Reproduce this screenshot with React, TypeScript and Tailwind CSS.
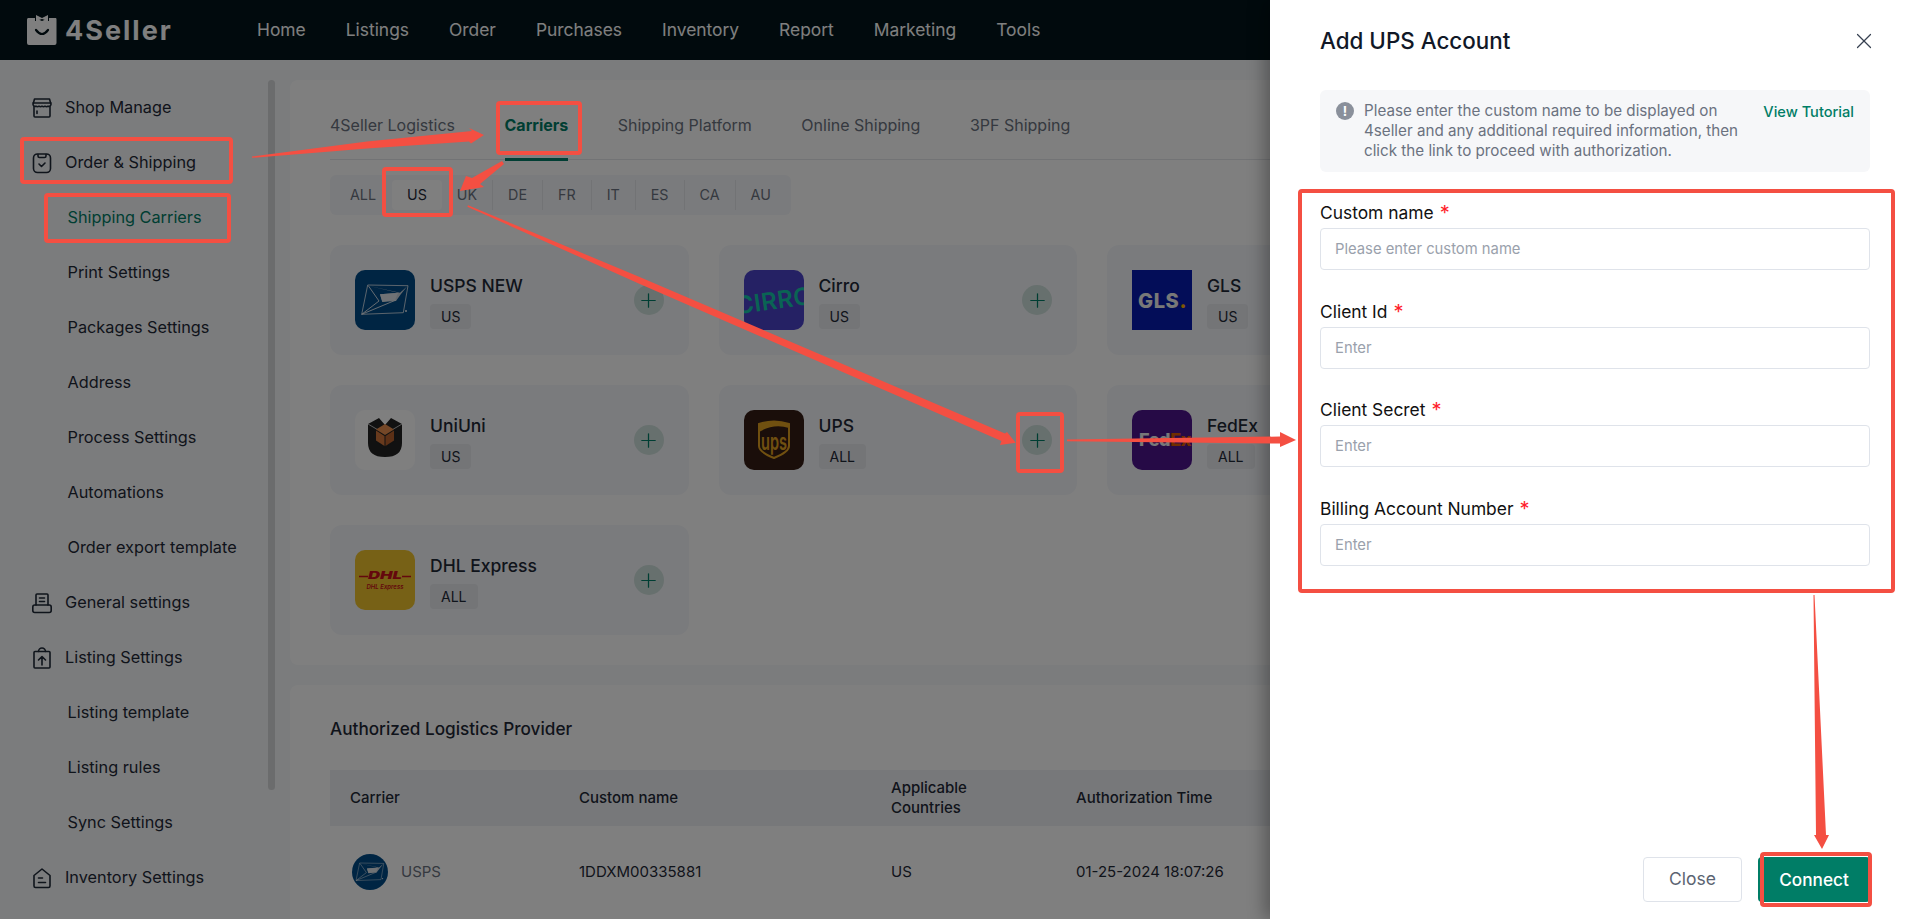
import React from "react";
import { X, Plus } from "lucide-react";

const nav = ["Home", "Listings", "Order", "Purchases", "Inventory", "Report", "Marketing", "Tools"];
const tabs = ["4Seller Logistics", "Carriers", "Shipping Platform", "Online Shipping", "3PF Shipping"];
const countries = ["ALL", "US", "UK", "DE", "FR", "IT", "ES", "CA", "AU"];

const ic = { width: 22, height: 22, viewBox: "0 0 22 22", fill: "none", stroke: "#1f2937", strokeWidth: 1.6, strokeLinecap: "round" as const, strokeLinejoin: "round" as const };

const ShopIcon = () => (
  <svg {...ic}><path d="M3.500 2h15l1.500 5.500a2.200 2.200 0 0 1-3 1.700 2.600 2.600 0 0 1-3 0 2.600 2.600 0 0 1-3 0 2.600 2.600 0 0 1-3 0 2.600 2.600 0 0 1-3 0A2.200 2.200 0 0 1 2 7.500z" /><path d="M3 9.500V19a1 1 0 0 0 1 1h14a1 1 0 0 0 1-1V9.500M2 6h18M6 14v2.500" /></svg>
);
const OrderIcon = () => (
  <svg {...ic}><rect x="2.500" y="2" width="17" height="18.500" rx="4" /><path d="M7 2.500v1.500a1.500 1.500 0 0 0 1.500 1.500h5A1.500 1.500 0 0 0 15 4V2.500M8 12l2.500 2.500L14 11" /></svg>
);
const GeneralIcon = () => (
  <svg {...ic}><path d="M5 13V3a1 1 0 0 1 1-1h10a1 1 0 0 1 1 1v10" /><path d="M8.500 6h5M8.500 9.500h5" /><rect x="1.800" y="13" width="18.400" height="7.500" rx="2" /></svg>
);
const ListingIcon = () => (
  <svg {...ic}><path d="M7.500 4.500H4a1 1 0 0 0-1 1V20a1 1 0 0 0 1 1h14a1 1 0 0 0 1-1V5.500a1 1 0 0 0-1-1h-3.500" /><path d="M7.500 4.500a3.500 3.500 0 0 1 7 0zM11 18v-8M7.500 13 11 9.500l3.500 3.500" /></svg>
);
const InventoryIcon = () => (
  <svg {...ic}><path d="M3 8.500 11 2l8 6.500V19a1.500 1.500 0 0 1-1.500 1.500h-13A1.500 1.500 0 0 1 3 19z" /><path d="M7.500 11h4M7.500 15.500h7" /></svg>
);

type Side = { label: string; icon?: React.ReactNode; active?: boolean };
const side: Side[] = [
  { label: "Shop Manage", icon: <ShopIcon /> },
  { label: "Order & Shipping", icon: <OrderIcon /> },
  { label: "Shipping Carriers", active: true },
  { label: "Print Settings" },
  { label: "Packages Settings" },
  { label: "Address" },
  { label: "Process Settings" },
  { label: "Automations" },
  { label: "Order export template" },
  { label: "General settings", icon: <GeneralIcon /> },
  { label: "Listing Settings", icon: <ListingIcon /> },
  { label: "Listing template" },
  { label: "Listing rules" },
  { label: "Sync Settings" },
  { label: "Inventory Settings", icon: <InventoryIcon /> },
];

const UspsMark = () => (
  <svg viewBox="0 0 60 60" className="w-full h-full">
    <path d="M12.700 15 53 15.700 48.300 42.700 6.700 44.300z" fill="none" stroke="#e4e9ee" strokeWidth="0.8" />
    <path d="M13.300 15.700 45 22.700 52 16.500 46 24 41 31 27.300 32 25 24.300 43 22.700z" fill="#c9d2da" />
    <path d="M25 24.300 43 23 40 30 27.300 31.700z" fill="#dfe5ea" />
    <path d="M6.700 44.300 41 30" stroke="#e4e9ee" strokeWidth="0.9" />
    <path d="M13.300 15.700 24 31 6.700 44.300" fill="none" stroke="#e4e9ee" strokeWidth="0.9" />
    <circle cx="51" cy="41" r="1" fill="#e4e9ee" />
  </svg>
);

const logos: Record<string, React.ReactNode> = {
  usps: <div className="w-[60px] h-[60px] rounded-[10px] overflow-hidden bg-[#004b87]"><UspsMark /></div>,
  cirro: (
    <div className="w-[60px] h-[60px] rounded-[10px] overflow-hidden bg-[#4a42c8]">
      <svg viewBox="0 0 60 60" className="w-full h-full">
        <text x="30" y="39" textAnchor="middle" transform="rotate(-8 30 30)" fontFamily="Inter, sans-serif" fontWeight="600" fontSize="24" fill="#14c9a8" letterSpacing="0.5">CIRRO</text>
      </svg>
    </div>
  ),
  gls: (
    <div className="w-[60px] h-[60px] overflow-hidden bg-[#061ab1]">
      <svg viewBox="0 0 60 60" className="w-full h-full">
        <text x="6" y="37.500" fontFamily="Inter, sans-serif" fontWeight="800" fontSize="20" fill="#f0f0f0" letterSpacing="0.600">GLS<tspan fill="#ffb000">.</tspan></text>
      </svg>
    </div>
  ),
  uni: (
    <div className="w-[60px] h-[60px] rounded-[10px] overflow-hidden bg-[#ffffff]">
      <svg viewBox="0 0 60 60" className="w-full h-full">
        <path d="M13 14 24 8 30 15 36 8 47 14V33Q47 47 30 47 13 47 13 33z" fill="#222" />
        <path d="M13 14l17 10 17-10" fill="none" stroke="#ddd" strokeWidth="0.800" />
        <path d="M30 15 41 21V31L30 38 20 31V21z" fill="#222" />
        <path d="M30 14 39 19.500 30 25 21 19.500z" fill="#e98f4f" />
        <path d="M21 20.500 29.500 26V36L21 30.500z" fill="#d0743a" />
        <path d="M39 20.500 30.500 26V36L39 30.500z" fill="#b9612c" />
      </svg>
    </div>
  ),
  ups: (
    <div className="w-[60px] h-[60px] rounded-[10px] overflow-hidden bg-[#351c15]">
      <svg viewBox="0 0 60 60" className="w-full h-full">
        <path d="M15 14Q30 9 45 14V36Q45 42 30 48 15 42 15 36z" fill="none" stroke="#e0a020" strokeWidth="2" />
        <path d="M15 22Q30 13 45 18V14Q30 9 15 14z" fill="#e0a020" />
        <text x="30" y="40" textAnchor="middle" fontFamily="Inter, sans-serif" fontWeight="600" fontSize="24" fill="#e0a020" textLength="26" lengthAdjust="spacingAndGlyphs">ups</text>
      </svg>
    </div>
  ),
  fedex: (
    <div className="w-[60px] h-[60px] rounded-[10px] overflow-hidden bg-[#4d148c]">
      <svg viewBox="0 0 60 60" className="w-full h-full">
        <text x="7" y="36" fontFamily="Inter, sans-serif" fontWeight="800" fontSize="18" fill="#f0f0f0" letterSpacing="-0.400">Fed<tspan fill="#e05a00">Ex</tspan></text>
      </svg>
    </div>
  ),
  dhl: (
    <div className="w-[60px] h-[60px] rounded-[10px] overflow-hidden bg-[#eec22c]">
      <svg viewBox="0 0 60 60" className="w-full h-full">
        <path d="M4 26.500h9M47 26.500h9" stroke="#c8101a" strokeWidth="1.300" />
        <text x="30" y="29" textAnchor="middle" fontFamily="Inter, sans-serif" fontStyle="italic" fontWeight="900" fontSize="11" fill="#c8101a" textLength="34" lengthAdjust="spacingAndGlyphs">DHL</text>
        <text x="30" y="38.500" textAnchor="middle" fontFamily="Inter, sans-serif" fontStyle="italic" fontWeight="600" fontSize="6.500" fill="#c8101a" textLength="37" lengthAdjust="spacingAndGlyphs">DHL Express</text>
      </svg>
    </div>
  ),
};

const carriers = [
  { name: "USPS NEW", tag: "US", logo: "usps" },
  { name: "Cirro", tag: "US", logo: "cirro" },
  { name: "GLS", tag: "US", logo: "gls" },
  { name: "UniUni", tag: "US", logo: "uni" },
  { name: "UPS", tag: "ALL", logo: "ups" },
  { name: "FedEx", tag: "ALL", logo: "fedex" },
  { name: "DHL Express", tag: "ALL", logo: "dhl" },
];

const fields = [
  { label: "Custom name", ph: "Please enter custom name" },
  { label: "Client Id", ph: "Enter" },
  { label: "Client Secret", ph: "Enter" },
  { label: "Billing Account Number", ph: "Enter" },
];

const RED = "#f44f42";
const boxes = [
  [20, 137, 213, 47],
  [44, 193, 187, 50],
  [496, 101, 86, 54],
  [382, 167, 71, 50],
  [1016, 412, 48, 61],
  [1298, 189, 597, 404],
  [1760, 852, 112, 55],
];
const arrows = [
  "252,156.400 367,141.500 472,131 469,128 484,135 471,143.500 469,141.500 367,148.500 252,157.800",
  "502,161 504,164 480,184 484,187 460,191 466,176 472,178",
  "468,205.300 640.800,277.500 1005,433.500 1007,432 1015.700,442.700 1000,445 1001.500,441 638.700,283.500 467.400,206.700",
  "1067,439.600 1280,436.500 1280,432 1296,440 1280,447 1280,443.500 1067,441.200",
  "1813.500,595 1816,835 1814,835 1822,849 1829,835 1826,835 1814.500,595",
];

export default function App() {
  return (
    <div className="relative w-[1920px] h-[919px] overflow-hidden bg-[#f6f8fa] font-[Inter,sans-serif] text-[#1f2937]">
      {/* Page */}
      <header className="flex items-center h-[60px] bg-[#02141a] pl-[26px]">
        <div className="flex items-center w-[231px] shrink-0">
          <svg width="32" height="32" viewBox="0 0 32 32">
            <path d="M2 4h7l7 3 7-3h7a2 2 0 0 1 .500 1.500V29a2 2 0 0 1-2 2H3a2 2 0 0 1-2-2V6a2 2 0 0 1 1-2z" fill="#fff" />
            <path d="M10 1l6 3 6-3v6l-6-2-6 2z" fill="#fff" />
            <path d="M9 1h1v6H9zM22 1h1v6h-1z" fill="#02141a" />
            <path d="M10 16q6 8 12 0" fill="none" stroke="#02141a" strokeWidth="2.200" strokeLinecap="round" />
          </svg>
          <span className="ml-[7px] text-[27px] leading-none font-bold tracking-[2px] text-white">4Seller</span>
        </div>
        <nav className="flex gap-10">
          {nav.map((n) => (
            <span key={n} className="text-[17.400px] text-white">{n}</span>
          ))}
        </nav>
      </header>

      <div className="flex h-[859px]">
        <aside className="flex w-[290px] shrink-0 pt-5">
          <div className="w-[268px]">
            {side.map((s) => (
              <div key={s.label} className={`flex items-center h-[55px] text-[16.300px] ${s.icon ? "pl-[31px]" : "pl-[67.500px]"} ${s.active ? "text-[#007d66]" : ""}`}>
                {s.icon && <span className="w-[34px] shrink-0">{s.icon}</span>}
                {s.label}
              </div>
            ))}
          </div>
          <div className="w-[7px] h-[710px] rounded-full bg-[#d6d8da]" />
        </aside>

        <main className="flex-1 flex flex-col gap-5 pt-5 pr-[25px] min-w-0">
          <section className="bg-white rounded-lg px-10 pt-[10px] pb-[30px]">
            <div className="flex h-[70px] border-b border-[#e5e7eb] gap-[49.500px]">
              {tabs.map((t) => (
                <div key={t} className={`flex items-center h-[71px] pt-[2px] text-[16px] border-b-[3px] ${t === "Carriers" ? "font-bold text-[#007d66] border-[#007d66]" : "text-[#6b7280] border-transparent"}`}>{t}</div>
              ))}
            </div>
            <div className="mt-[15px] inline-flex h-10 p-[5px] rounded-md bg-[#f5f7fa]">
              {countries.map((c, i) => (
                <div key={c} className={`flex items-center px-[15px] text-[14.300px] ${c === "US" ? "bg-white rounded text-[#1f2937]" : "text-[#6b7280]"} ${i > 1 && i < 8 ? "border-r border-[#e5e7eb]" : ""} ${i === 0 ? "pr-[16px]" : ""}`}>{c}</div>
              ))}
            </div>
            <div className="mt-[30px] grid grid-cols-[repeat(3,358.500px)] gap-[30px]">
              {carriers.map((c) => (
                <div key={c.name} className="flex items-center h-[110px] p-[25px] rounded-xl bg-[#f5f7fa]">
                  {logos[c.logo]}
                  <div className="ml-[15px]">
                    <div className="h-[30px] leading-[30px] text-[17.500px] font-medium whitespace-nowrap">{c.name}</div>
                    <span className="mt-[3px] flex items-center w-fit h-[25px] px-[11px] rounded bg-[#e8eaee] text-[14px]">{c.tag}</span>
                  </div>
                  <span className="ml-auto flex items-center justify-center w-[30px] h-[30px] rounded-full bg-[#cfe0dc] text-[#007d66]">
                    <Plus size={23} strokeWidth={1.300} />
                  </span>
                </div>
              ))}
            </div>
          </section>

          <section className="flex-1 bg-white rounded-t-lg px-10 pt-[30px]">
            <h2 className="h-[27px] leading-[27px] text-[17.200px] font-medium">Authorized Logistics Provider</h2>
            <div className="mt-[28px] grid grid-cols-[229px_312px_185px_1fr] items-center h-14 px-5 bg-[#eff1f5] text-[15px] font-medium leading-5">
              <span>Carrier</span>
              <span>Custom name</span>
              <span className="w-[100px]">Applicable Countries</span>
              <span>Authorization Time</span>
            </div>
            <div className="grid grid-cols-[229px_312px_185px_1fr] items-center h-[92px] px-5 text-[15px]">
              <span className="flex items-center gap-[13px] text-[#6b7280]">
                <span className="block w-9 h-9 ml-[2px] rounded-full overflow-hidden bg-[#004b87]"><UspsMark /></span>
                USPS
              </span>
              <span>1DDXM00335881</span>
              <span>US</span>
              <span>01-25-2024 18:07:26</span>
            </div>
          </section>
        </main>
      </div>

      {/* Dim layer */}
      <div className="absolute inset-0 bg-black/50" />

      {/* Drawer */}
      <aside className="absolute top-0 right-0 bottom-0 w-[650px] flex flex-col bg-white px-[50px] shadow-[-6px_0_16px_rgba(0,0,0,0.3)]">
        <div className="flex items-center justify-between h-[90px] pb-[8px] text-[#111827]">
          <h1 className="text-[22.400px] font-medium">Add UPS Account</h1>
          <X size={26} strokeWidth={1.100} className="text-[#374151] -mr-[7px]" />
        </div>
        <div className="flex items-start h-[82px] px-4 pt-[11px] rounded-md bg-[#f6f7f9]">
          <span className="flex items-center justify-center w-[18px] h-[18px] mt-[1px] rounded-full bg-[#8a909b] text-white text-[13px] leading-none font-bold shrink-0">!</span>
          <p className="ml-[10px] w-[375px] text-[15.200px] leading-5 text-[#6b7280]">
            Please enter the custom name to be displayed on 4seller and any additional required information, then click the link to proceed with authorization.
          </p>
          <span className="ml-auto mt-[1px] text-[14.600px] font-medium text-[#007d66] whitespace-nowrap">View Tutorial</span>
        </div>
        <form className="mt-[29px] flex flex-col gap-[29.600px]">
          {fields.map((f) => (
            <label key={f.label} className="block">
              <span className="flex items-start gap-[6px] h-6 leading-6 text-[17.400px] text-[#111]">
                {f.label}
                <span className="text-[20px] text-[#ff1f2b]">*</span>
              </span>
              <input
                placeholder={f.ph}
                className="mt-[3px] block w-full h-[42px] px-[14px] rounded border border-[#dfe3ea] text-[14.800px] outline-none placeholder:text-[#9aa1ac]"
              />
            </label>
          ))}
        </form>
        <div className="mt-auto mb-[17px] flex justify-end gap-4">
          <button className="w-[99px] h-[45px] rounded border border-[#dfe3ea] text-[17.500px] text-[#5b6472]">Close</button>
          <button className="w-[112px] h-[45px] rounded bg-[#007d66] text-[17.200px] font-medium text-white">Connect</button>
        </div>
      </aside>

      {/* Red annotations */}
      <svg className="absolute inset-0 pointer-events-none" width="1920" height="919" viewBox="0 0 1920 919">
        {boxes.map(([x, y, w, h], i) => (
          <rect key={i} x={x + 2} y={y + 2} width={w - 4} height={h - 4} rx="2" fill="none" stroke={RED} strokeWidth="4" />
        ))}
        {arrows.map((p, i) => (
          <polygon key={i} points={p} fill={RED} />
        ))}
      </svg>
    </div>
  );
}
